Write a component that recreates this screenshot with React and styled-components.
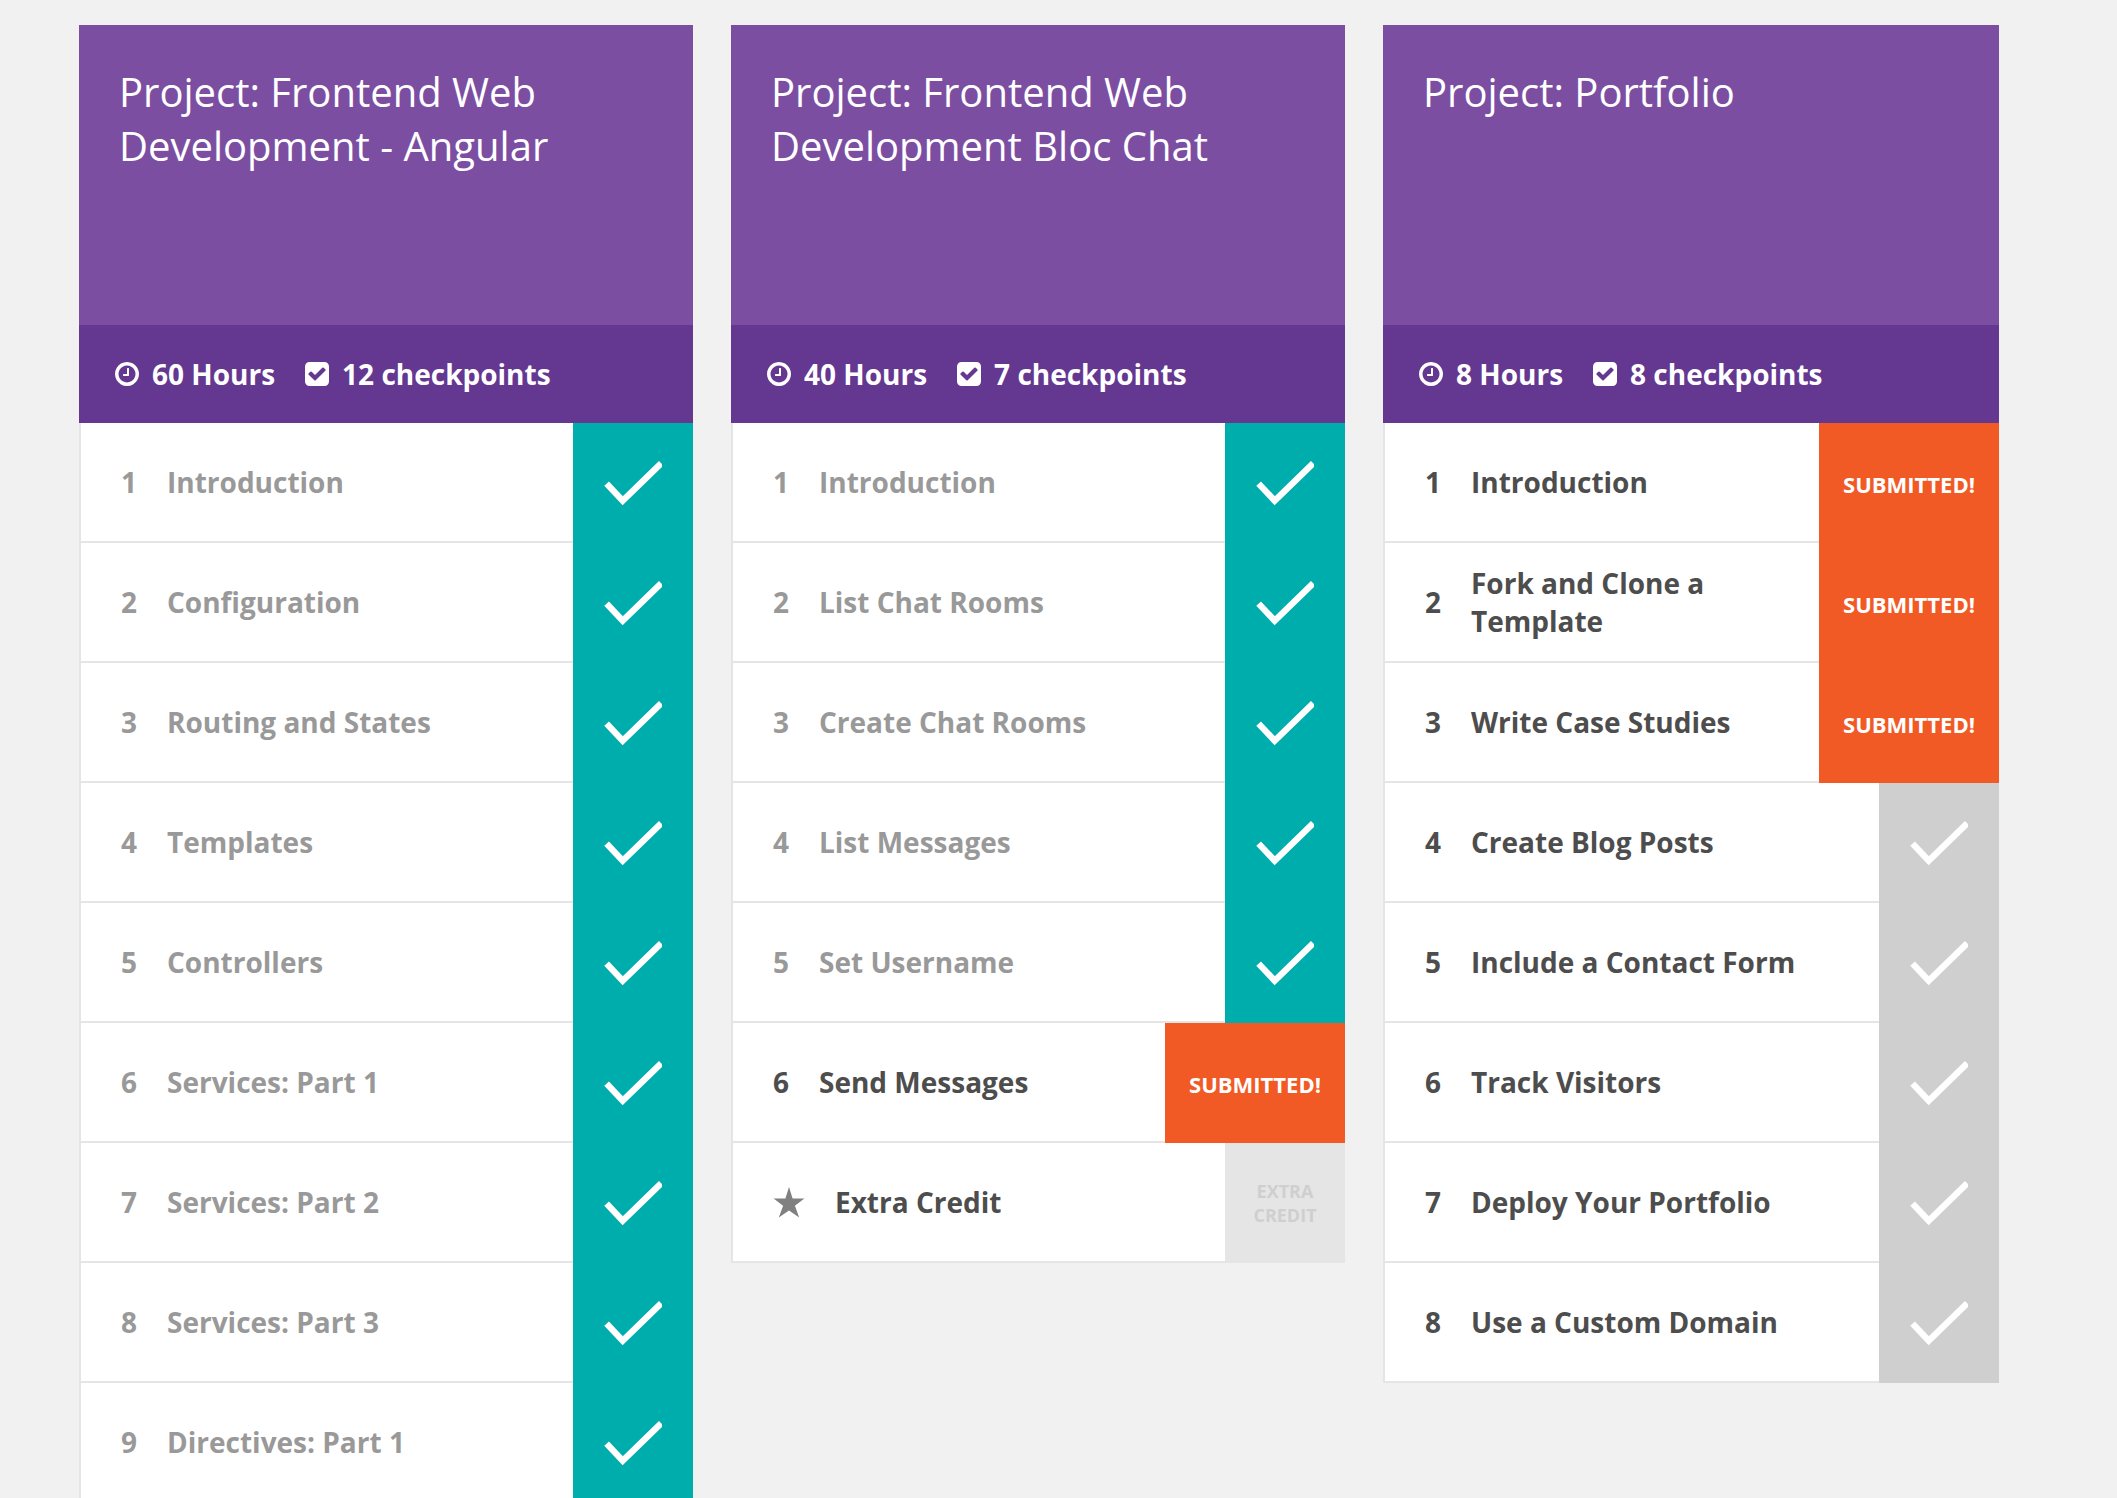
import React from "react";
import styled, { createGlobalStyle } from "styled-components";

const GlobalStyle = createGlobalStyle`
  *, *::before, *::after { box-sizing: border-box; }
  body {
    margin: 0;
    background: #f1f1f1;
    font-family: "Open Sans", "Noto Sans", sans-serif;
  }
`;

const Page = styled.main`
  display: grid;
  grid-template-columns: 307fr 307fr 308fr;
  gap: 38px;
  align-items: start;
  height: 100vh;
  padding: 25px 118px 0 79px;
  overflow: hidden;
`;

const Card = styled.section`
  min-width: 0;
`;

const CardHeader = styled.header`
  min-height: 300px;
  padding: 40px;
  background: #7b4ea2;
`;

const CardTitle = styled.h2`
  margin: 0;
  color: #fff;
  font-size: 40px;
  font-weight: 400;
  line-height: 54px;
`;

const Meta = styled.div`
  display: flex;
  align-items: center;
  gap: 30px;
  min-height: 98px;
  padding: 0 36px;
  background: #643791;
`;

const MetaItem = styled.span`
  display: flex;
  align-items: center;
  gap: 13px;
  color: #fff;
  font-size: 28px;
  font-weight: 700;
  line-height: 38px;
`;

const MetaIcon = styled.svg`
  width: 24px;
  height: 24px;
  fill: currentColor;
`;

const List = styled.ol`
  margin: 0;
  padding: 0;
  list-style: none;
`;

const Row = styled.a`
  display: flex;
  min-height: 120px;
  background: #fff;
  color: ${(p) => (p.$muted ? "#999" : "#4d4d4d")};
  font-size: 28px;
  font-weight: 700;
  line-height: 38px;
  text-decoration: none;
`;

const Label = styled.span`
  display: flex;
  flex: 1;
  align-items: center;
  min-width: 0;
  padding: 0 40px;
  border-left: 2px solid #e5e5e5;
  border-bottom: 2px solid #e5e5e5;
`;

const Marker = styled.span`
  display: flex;
  flex: none;
  width: ${(p) => (p.$wide ? "62px" : "46px")};
`;

const Star = styled.svg`
  width: 32px;
  height: 32px;
  fill: #808080;
`;

const statusColors = {
  done: "#00adad",
  pending: "#cfcfcf",
  submitted: "#f15a25",
  extra: "#e5e5e5",
};

const Status = styled.span`
  display: flex;
  flex: none;
  align-items: center;
  justify-content: center;
  width: ${(p) => (p.$kind === "submitted" ? "180px" : "120px")};
  padding-top: ${(p) => (p.$kind === "submitted" ? "2px" : "0")};
  background: ${(p) => statusColors[p.$kind]};
  color: ${(p) => (p.$kind === "extra" ? "#cfcfcf" : "#fff")};
  font-size: ${(p) => (p.$kind === "extra" ? "18px" : "22px")};
  line-height: 24px;
  text-align: center;
  text-transform: uppercase;
`;

const Check = styled.svg`
  width: 58px;
  height: 46px;
  fill: none;
  stroke: #fff;
  stroke-width: 6.4;
`;

const CheckMark = () => (
  <Check viewBox="0 0 58 46" role="img" aria-label="Checkpoint status">
    <path d="M2.6 23.6 L18.7 40.8 L57.2 3.2" />
  </Check>
);

const ClockIcon = () => (
  <MetaIcon viewBox="0 128 1536 1536" aria-hidden="true">
    <path d="M896 544v448q0 14-9 23t-23 9h-320q-14 0-23-9t-9-23v-64q0-14 9-23t23-9h224v-352q0-14 9-23t23-9h64q14 0 23 9t9 23zm416 352q0-148-73-273t-198-198-273-73-273 73-198 198-73 273 73 273 198 198 273 73 273-73 198-198 73-273zm224 0q0 209-103 385.5t-279.5 279.5-385.5 103-385.5-103-279.5-279.5-103-385.5 103-385.5 279.5-279.5 385.5-103 385.5 103 279.5 279.5 103 385.5z" />
  </MetaIcon>
);

const CheckSquareIcon = () => (
  <MetaIcon viewBox="128 128 1536 1536" aria-hidden="true">
    <path d="M813 1299l614-614q19-19 19-45t-19-45l-102-102q-19-19-45-19t-45 19l-467 467-211-211q-19-19-45-19t-45 19l-102 102q-19 19-19 45t19 45l358 358q19 19 45 19t45-19zm851-883v960q0 119-84.5 203.5t-203.5 84.5h-960q-119 0-203.5-84.5t-84.5-203.5v-960q0-119 84.5-203.5t203.5-84.5h960q119 0 203.5 84.5t84.5 203.5z" />
  </MetaIcon>
);

const StarIcon = () => (
  <Star viewBox="0 0 32 32" aria-hidden="true">
    <path d="M16 1 L19.6 12.6 H31.4 L21.9 19.8 L26.2 31.6 L16 24.4 L5.8 31.6 L10.1 19.8 L0.6 12.6 H12.4 Z" />
  </Star>
);

const statusContent = {
  done: <CheckMark />,
  pending: <CheckMark />,
  submitted: "Submitted!",
  extra: "Extra Credit",
};

const projects = [
  {
    title: "Project: Frontend Web Development - Angular",
    hours: 60,
    checkpoints: 12,
    items: [
      ["Introduction", "done"],
      ["Configuration", "done"],
      ["Routing and States", "done"],
      ["Templates", "done"],
      ["Controllers", "done"],
      ["Services: Part 1", "done"],
      ["Services: Part 2", "done"],
      ["Services: Part 3", "done"],
      ["Directives: Part 1", "done"],
    ],
  },
  {
    title: "Project: Frontend Web Development Bloc Chat",
    hours: 40,
    checkpoints: 7,
    items: [
      ["Introduction", "done"],
      ["List Chat Rooms", "done"],
      ["Create Chat Rooms", "done"],
      ["List Messages", "done"],
      ["Set Username", "done"],
      ["Send Messages", "submitted"],
      ["Extra Credit", "extra"],
    ],
  },
  {
    title: "Project: Portfolio",
    hours: 8,
    checkpoints: 8,
    items: [
      ["Introduction", "submitted"],
      ["Fork and Clone a Template", "submitted"],
      ["Write Case Studies", "submitted"],
      ["Create Blog Posts", "pending"],
      ["Include a Contact Form", "pending"],
      ["Track Visitors", "pending"],
      ["Deploy Your Portfolio", "pending"],
      ["Use a Custom Domain", "pending"],
    ],
  },
];

export default function App() {
  return (
    <>
      <GlobalStyle />
      <Page>
        {projects.map((project) => (
          <Card key={project.title}>
            <CardHeader>
              <CardTitle>{project.title}</CardTitle>
            </CardHeader>
            <Meta>
              <MetaItem>
                <ClockIcon />
                {`${project.hours} Hours`}
              </MetaItem>
              <MetaItem>
                <CheckSquareIcon />
                {`${project.checkpoints} checkpoints`}
              </MetaItem>
            </Meta>
            <List>
              {project.items.map(([name, kind], i) => (
                <li key={name}>
                  <Row href="#" $muted={kind === "done"}>
                    <Label>
                      <Marker $wide={kind === "extra"}>
                        {kind === "extra" ? <StarIcon /> : i + 1}
                      </Marker>
                      <span>{name}</span>
                    </Label>
                    <Status $kind={kind}>{statusContent[kind]}</Status>
                  </Row>
                </li>
              ))}
            </List>
          </Card>
        ))}
      </Page>
    </>
  );
}
